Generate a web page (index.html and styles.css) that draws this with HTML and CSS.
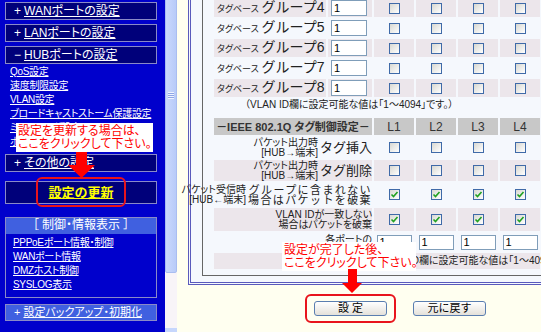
FILE: index.html
```html
<!DOCTYPE html>
<html lang="ja">
<head>
    <meta charset="UTF-8">
    <title>HUBポートの設定</title>
    <link rel="stylesheet" href="styles.css">
</head>
<body>
<div class="frames">
    <!-- 左メニュー -->
    <div class="menu">
        <div class="mbox"><span class="sign">+</span><a>WANポートの設定</a></div>
        <div class="mbox"><span class="sign">+</span><a>LANポートの設定</a></div>
        <div class="mbox"><span class="sign">−</span><a>HUBポートの設定</a></div>
        <ul class="links sub">
            <li><a>QoS設定</a></li>
            <li><a>速度制限設定</a></li>
            <li><a>VLAN設定</a></li>
            <li><a>ブロードキャストストーム保護設定</a></li>
            <li><a>ミラーリング設定</a></li>
            <li><a>ポート設定</a></li>
        </ul>
        <div class="mbox other"><span class="sign">+</span><a>その他の設定</a></div>
        <div class="mbox update"><a>設定の更新</a></div>
        <div class="group">
            <div class="group_head">［ 制御・情報表示 ］</div>
            <ul class="links">
                <li><a>PPPoEポート情報・制御</a></li>
                <li><a>WANポート情報</a></li>
                <li><a>DMZホスト制御</a></li>
                <li><a>SYSLOG表示</a></li>
            </ul>
        </div>
        <div class="mbox backup"><span class="sign">+</span><a>設定バックアップ・初期化</a></div>
    </div>

    <div class="scrollbar">
        <div class="thumb"><span class="grip"></span></div>
        <div class="track"></div>
        <div class="down"></div>
    </div>

    <!-- 右側 設定画面 -->
    <div class="main">
        <div class="panel">
            <table class="vlan">
                <colgroup>
                    <col class="c_label"><col class="c_input">
                    <col class="c_cb"><col class="c_cb"><col class="c_cb"><col class="c_cb">
                </colgroup>
                <tr class="r_grp shade">
                    <td class="label"><span class="small">タグベース</span> <span class="big">グループ4</span></td>
                    <td class="inp"><input class="num" type="text" value="1"></td>
                    <td><span class="cb"></span></td><td><span class="cb"></span></td><td><span class="cb"></span></td><td><span class="cb"></span></td>
                </tr>
                <tr class="r_grp">
                    <td class="label"><span class="small">タグベース</span> <span class="big">グループ5</span></td>
                    <td class="inp"><input class="num" type="text" value="1"></td>
                    <td><span class="cb"></span></td><td><span class="cb"></span></td><td><span class="cb"></span></td><td><span class="cb"></span></td>
                </tr>
                <tr class="r_grp shade">
                    <td class="label"><span class="small">タグベース</span> <span class="big">グループ6</span></td>
                    <td class="inp"><input class="num" type="text" value="1"></td>
                    <td><span class="cb"></span></td><td><span class="cb"></span></td><td><span class="cb"></span></td><td><span class="cb"></span></td>
                </tr>
                <tr class="r_grp">
                    <td class="label"><span class="small">タグベース</span> <span class="big">グループ7</span></td>
                    <td class="inp"><input class="num" type="text" value="1"></td>
                    <td><span class="cb"></span></td><td><span class="cb"></span></td><td><span class="cb"></span></td><td><span class="cb"></span></td>
                </tr>
                <tr class="r_grp shade">
                    <td class="label"><span class="small">タグベース</span> <span class="big">グループ8</span></td>
                    <td class="inp"><input class="num" type="text" value="1"></td>
                    <td><span class="cb"></span></td><td><span class="cb"></span></td><td><span class="cb"></span></td><td><span class="cb"></span></td>
                </tr>
                <tr class="r_note">
                    <td colspan="6" class="note">（VLAN ID欄に設定可能な値は「1～4094」です。）</td>
                </tr>
                <tr class="r_head">
                    <td colspan="2" class="hd hd_title">－IEEE 802.1Q タグ制御設定－</td>
                    <td class="hd">L1</td><td class="hd">L2</td><td class="hd">L3</td><td class="hd">L4</td>
                </tr>
                <tr class="r_mid">
                    <td colspan="2"><div class="lab"><span class="two">パケット出力時<br>[HUB→端末]</span><span class="act">タグ挿入</span></div></td>
                    <td><span class="cb"></span></td><td><span class="cb"></span></td><td><span class="cb"></span></td><td><span class="cb"></span></td>
                </tr>
                <tr class="r_mid shade">
                    <td colspan="2"><div class="lab"><span class="two">パケット出力時<br>[HUB→端末]</span><span class="act">タグ削除</span></div></td>
                    <td><span class="cb"></span></td><td><span class="cb"></span></td><td><span class="cb"></span></td><td><span class="cb"></span></td>
                </tr>
                <tr class="r_big">
                    <td colspan="2"><div class="lab"><span class="two">パケット受信時<br>[HUB←端末]</span><span class="two wide">グループに含まれない<br>場合はパケットを破棄</span></div></td>
                    <td><span class="cb on"><svg viewBox="0 0 9 9"><path d="M1.5 4.5 L3.5 6.5 L7.5 2"/></svg></span></td>
                    <td><span class="cb on"><svg viewBox="0 0 9 9"><path d="M1.5 4.5 L3.5 6.5 L7.5 2"/></svg></span></td>
                    <td><span class="cb on"><svg viewBox="0 0 9 9"><path d="M1.5 4.5 L3.5 6.5 L7.5 2"/></svg></span></td>
                    <td><span class="cb on"><svg viewBox="0 0 9 9"><path d="M1.5 4.5 L3.5 6.5 L7.5 2"/></svg></span></td>
                </tr>
                <tr class="r_big shade">
                    <td colspan="2"><div class="lab"><span class="two">VLAN IDが一致しない<br>場合はパケットを破棄</span></div></td>
                    <td><span class="cb on"><svg viewBox="0 0 9 9"><path d="M1.5 4.5 L3.5 6.5 L7.5 2"/></svg></span></td>
                    <td><span class="cb on"><svg viewBox="0 0 9 9"><path d="M1.5 4.5 L3.5 6.5 L7.5 2"/></svg></span></td>
                    <td><span class="cb on"><svg viewBox="0 0 9 9"><path d="M1.5 4.5 L3.5 6.5 L7.5 2"/></svg></span></td>
                    <td><span class="cb on"><svg viewBox="0 0 9 9"><path d="M1.5 4.5 L3.5 6.5 L7.5 2"/></svg></span></td>
                </tr>
                <tr class="r_port">
                    <td colspan="2" class="port_lab">各ポートの</td>
                    <td><input class="num port" type="text" value="1"></td>
                    <td><input class="num port" type="text" value="1"></td>
                    <td><input class="num port" type="text" value="1"></td>
                    <td><input class="num port" type="text" value="1"></td>
                </tr>
                <tr class="r_note2 shade">
                    <td colspan="2"></td>
                    <td colspan="4" class="note2">（VLAN ID欄に設定可能な値は「1～4094」です。）</td>
                </tr>
            </table>
        </div>
        <div class="buttons">
            <button>設 定</button>
            <button>元に戻す</button>
        </div>
    </div>
</div>

<!-- 説明の吹き出し -->
<div class="callout callout_menu">設定を更新する場合は、<br>ここをクリックして下さい。</div>
<svg class="arrow arrow_menu" viewBox="0 0 27 26"><polygon points="8,0 19,0 19,13 27,13 13.5,26 0,13 8,13"/></svg>
<div class="ring ring_menu"></div>

<div class="callout callout_main">設定が完了した後、<br>ここをクリックして下さい。</div>
<svg class="arrow arrow_main" viewBox="0 0 20 24"><polygon points="6,0 15,0 15,14 20,14 10,24 0,14 6,14"/></svg>
<div class="ring ring_main"></div>
</body>
</html>
```

FILE: styles.css
```css
body {
    margin: 0;
    width: 541px;
    height: 332px;
    overflow: hidden;
    position: relative;
    font-family: "Liberation Sans", "Noto Sans CJK JP", sans-serif;
    font-feature-settings: "palt" 1;
}

.frames {
    display: flex;
    height: 332px;
}

/* 左メニュー */
.menu {
    width: 165px;
    flex: none;
    box-sizing: border-box;
    padding: 2px 8px 0 5px;
    background-color: #0000cc;
    color: #ffffff;
    overflow: hidden;
}

.menu a {
    color: #ffffff;
    text-decoration: underline;
}

.mbox {
    height: 18px;
    box-sizing: border-box;
    margin-bottom: 4px;
    padding-left: 8px;
    border: 1px solid #8a8ac8;
    background-color: #00007a;
    font-size: 12px;
    line-height: 16px;
    white-space: nowrap;
}

.sign {
    margin-right: 3px;
}

.links {
    list-style: none;
    margin: 0;
    padding: 0 0 0 5px;
    font-size: 10px;
    line-height: 14px;
    letter-spacing: -0.3px;
    white-space: nowrap;
}

.links.sub {
    margin-top: -3px;
}

.other {
    margin-top: 5px;
}

.update {
    height: 23px;
    margin-top: 9px;
    padding-left: 0;
    text-align: center;
    font-size: 13px;
    font-weight: bold;
    line-height: 21px;
}

.menu .update a {
    color: #ffff00;
}

.group {
    margin-top: 13px;
    padding-bottom: 5px;
    border: 1px solid #8a8ac8;
}

.group_head {
    height: 16px;
    margin-bottom: 2px;
    background-color: #4060e0;
    text-align: center;
    font-size: 12px;
    line-height: 15px;
}

.group .links {
    padding-left: 7px;
}

.backup {
    height: 17px;
    margin-top: 6px;
    background-color: #4060e0;
    font-size: 11px;
    line-height: 15px;
}

/* スクロールバー */
.scrollbar {
    width: 12px;
    flex: none;
    display: flex;
    flex-direction: column;
    background-color: #f8f4f8;
}

.thumb {
    height: 355px;
    margin-top: -82px;
    flex: none;
    box-sizing: border-box;
    border: 1px solid #a9bdf0;
    border-radius: 2px;
    background: linear-gradient(to right, #cad9fd, #b8cbf8);
    display: flex;
    align-items: center;
    justify-content: center;
}

.grip {
    width: 6px;
    height: 7px;
    background: repeating-linear-gradient(#eef3ff 0 1px, #8ea6e6 1px 2px);
}

.track {
    flex: 1;
}

.down {
    height: 4px;
    background-color: #c6d6fc;
}

/* 右側 */
.main {
    flex: 1;
    padding-left: 11px;
    background-color: #fffff0;
    overflow: hidden;
}

.panel {
    width: 378px;
    box-sizing: border-box;
    margin-top: -10px;
    padding: 0 11px 6px 11px;
    border: 3px double #5a5abc;
    background-color: #f5f8fd;
}

.vlan {
    width: 350px;
    table-layout: fixed;
    border: 1px solid #666666;
    border-spacing: 2px;
    padding: 3px 9px 4px 9px;
    font-size: 10px;
    line-height: 12px;
    color: #222222;
}

.c_label { width: 112px; }
.c_input { width: 44px; }
.c_cb { width: 40px; }

.vlan td {
    padding: 0;
    white-space: nowrap;
}

.shade td {
    background-color: #ece6eb;
}

.r_grp { height: 18px; }
.r_note { height: 17px; }
.r_head { height: 17px; }
.r_mid { height: 21px; }
.r_big { height: 23px; }
.r_port { height: 18px; }
.r_note2 { height: 16px; }

.vlan .label {
    padding-left: 3px;
    line-height: 16px;
}

.small {
    font-size: 9px;
}

.big {
    font-size: 14px;
    font-feature-settings: normal;
}

.num {
    display: block;
    width: 36px;
    height: 16px;
    box-sizing: border-box;
    margin-left: 3px;
    padding: 0 2px;
    border: 1px solid #7f9db9;
    background-color: #ffffff;
    font: 11px "Liberation Sans", sans-serif;
    color: #000000;
}

.num.port {
    width: 35px;
    height: 15px;
    margin: 0 auto;
}

.cb {
    display: block;
    width: 11px;
    height: 11px;
    box-sizing: border-box;
    margin: 0 auto;
    border: 1px solid #3f6aa8;
    background: linear-gradient(135deg, #d8d8d2, #ffffff);
}

.cb svg {
    display: block;
    width: 9px;
    height: 9px;
}

.cb path {
    fill: none;
    stroke: #21a121;
    stroke-width: 1.6;
}

.vlan .note {
    vertical-align: top;
    padding: 0 0 0 31px;
    line-height: 12px;
}

.vlan .hd {
    background-color: #c8c8c8;
    text-align: center;
    font-size: 12px;
    line-height: 14px;
    color: #333333;
}

.vlan .hd_title {
    font-size: 11px;
    font-weight: bold;
}

.lab {
    display: flex;
    justify-content: flex-end;
    align-items: center;
}

.two {
    font-size: 10px;
    line-height: 10px;
    text-align: right;
}

.act {
    margin-left: 2px;
    font-size: 13px;
    line-height: 14px;
    font-feature-settings: normal;
}

.wide {
    margin-left: 2px;
    font-size: 11px;
    letter-spacing: 1.4px;
    line-height: 10px;
    font-feature-settings: normal;
}

.vlan .port_lab {
    vertical-align: top;
    text-align: right;
    line-height: 11px;
    padding-top: 1px;
}

.vlan .note2 {
    padding-left: 1px;
}

.buttons {
    display: flex;
    gap: 26px;
    margin-top: 16px;
    padding-left: 126px;
}

.buttons button {
    width: 73px;
    height: 15px;
    padding: 0;
    border: 1px solid #5a7eb0;
    border-radius: 3px;
    background: linear-gradient(#ffffff, #e4e1da);
    font-family: inherit;
    font-size: 11px;
    line-height: 13px;
    color: #000000;
}

/* 吹き出しと矢印 */
.callout {
    position: absolute;
    box-sizing: border-box;
    padding: 2px 0 0 2px;
    background-color: #ffffff;
    color: #ff0000;
    font-size: 12px;
    line-height: 13px;
    white-space: nowrap;
}

.callout_menu {
    left: 16px;
    top: 123px;
    width: 137px;
    height: 29px;
}

.callout_main {
    left: 282px;
    top: 242px;
    width: 134px;
    height: 29px;
}

.arrow {
    position: absolute;
    fill: #ff0000;
}

.arrow_menu {
    left: 68px;
    top: 152px;
    width: 27px;
    height: 26px;
}

.arrow_main {
    left: 342px;
    top: 269px;
    width: 20px;
    height: 24px;
}

.ring {
    position: absolute;
    box-sizing: border-box;
    border: 2px solid #e8141c;
    border-radius: 6px;
}

.ring_menu {
    left: 36px;
    top: 177px;
    width: 90px;
    height: 30px;
}

.ring_main {
    left: 305px;
    top: 294px;
    width: 91px;
    height: 29px;
}
```
